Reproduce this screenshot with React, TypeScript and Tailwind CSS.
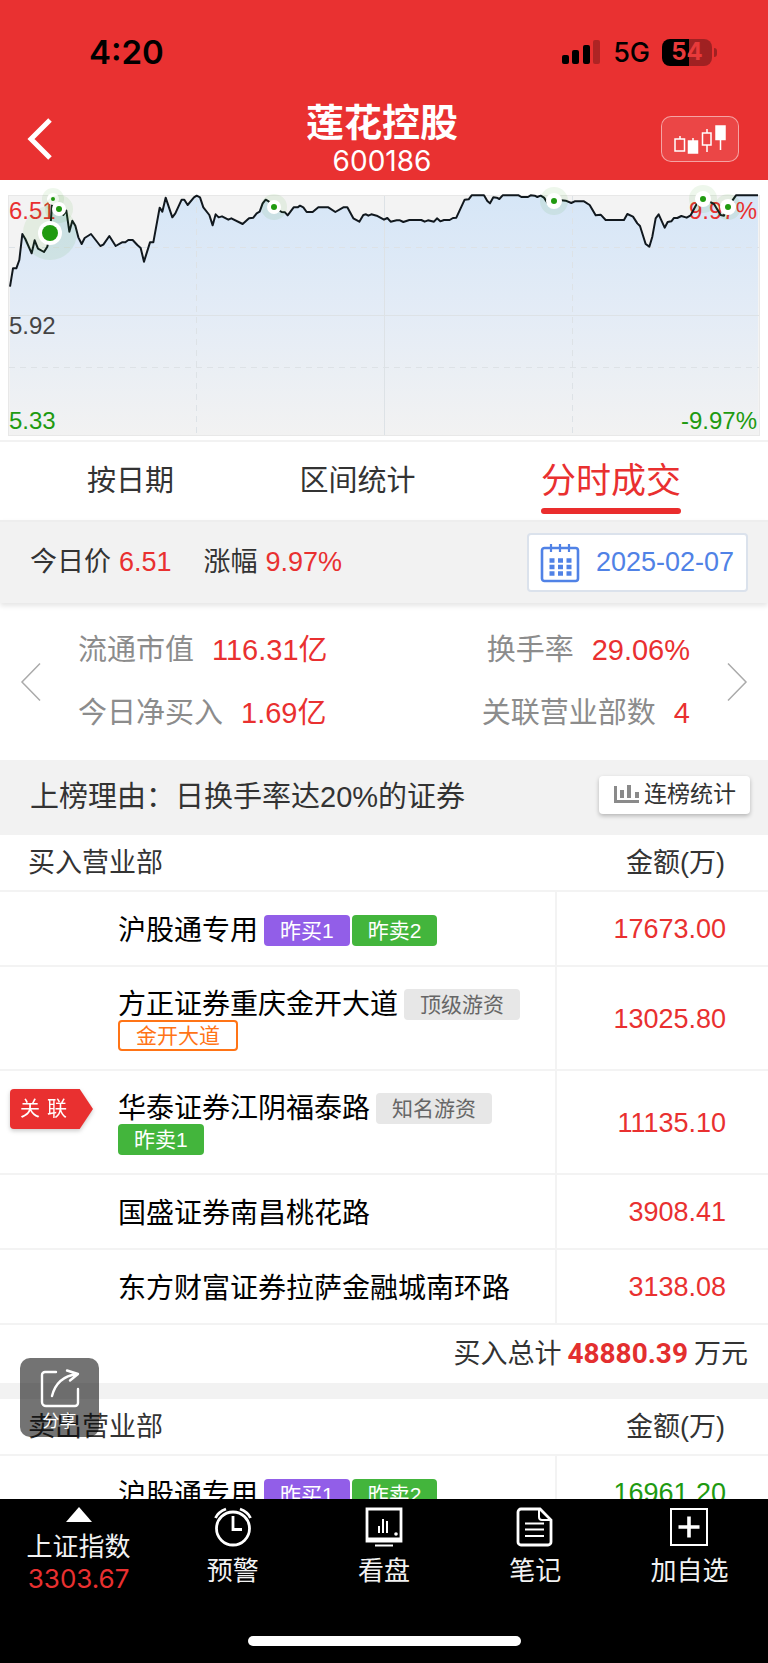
import type { ReactNode } from 'react';
import cn from 'clsx';

type TagKind = 'buy' | 'sell' | 'level' | 'alias';

interface Tag {
  kind: TagKind;
  text: string;
}

interface Seat {
  name: string;
  amount: string;
  tags?: Tag[];
  // tag shown on a line of its own, below the name
  extra?: Tag;
  related?: boolean;
}

const buySeats: Seat[] = [
  {
    name: '沪股通专用',
    amount: '17673.00',
    tags: [
      { kind: 'buy', text: '昨买1' },
      { kind: 'sell', text: '昨卖2' },
    ],
  },
  {
    name: '方正证券重庆金开大道',
    amount: '13025.80',
    tags: [{ kind: 'level', text: '顶级游资' }],
    extra: { kind: 'alias', text: '金开大道' },
  },
  {
    name: '华泰证券江阴福泰路',
    amount: '11135.10',
    tags: [{ kind: 'level', text: '知名游资' }],
    extra: { kind: 'sell', text: '昨卖1' },
    related: true,
  },
  { name: '国盛证券南昌桃花路', amount: '3908.41' },
  { name: '东方财富证券拉萨金融城南环路', amount: '3138.08' },
];

const sellSeats: Seat[] = [
  {
    name: '沪股通专用',
    amount: '16961.20',
    tags: [
      { kind: 'buy', text: '昨买1' },
      { kind: 'sell', text: '昨卖2' },
    ],
  },
];

// minute line, three units per pixel of the chart
const line =
  '30,320 39,265 49,265 58,240 67,162 76,177 95,220 104,181 114,206 132,216 142,200 150,160 156,75 160,60 178,90 190,105 199,92 208,155 217,122 226,137 235,172 245,192 254,174 273,162 301,198 310,194 328,168 347,198 366,187 376,187 385,180 398,180 412,195 422,204 432,245 450,187 460,187 479,83 487,95 497,53 517,112 526,100 545,59 553,59 563,75 582,52 590,47 600,52 610,82 628,105 638,136 647,103 656,112 666,109 685,119 694,115 728,132 747,115 760,113 770,100 779,95 788,70 797,59 806,64 821,81 845,96 855,97 863,106 881,82 893,82 900,77 910,82 920,96 938,96 955,82 985,82 1006,96 1030,82 1042,82 1060,115 1078,125 1090,105 1098,103 1105,107 1114,103 1130,107 1152,119 ' +
  '1162,114 1172,125 1190,121 1200,121 1210,126 1228,120 1264,120 1274,125 1284,121 1302,125 1311,115 1321,124 1332,120 1349,120 1359,114 1369,113 1394,59 1406,58 1415,46 1452,46 1462,63 1470,70 1480,52 1490,53 1498,57 1508,46 1556,46 1564,51 1584,51 1592,46 1604,47 1612,51 1622,47 1632,53 1642,68 1657,80 1677,60 1697,62 1714,69 1724,64 1752,64 1769,75 1787,106 1802,104 1817,120 1872,120 1882,102 1899,110 1912,130 1920,138 1937,192 1948,200 1957,170 1967,115 1976,103 1994,143 2003,126 2014,124 2022,114 2032,114 2044,108 2060,113 2072,106 2090,72 2108,57 2127,64 2142,72 2162,105 2172,107 2182,80 2197,62 2208,46 2274,46';

const dots = [
  { x: 50, y: 53, halo: 27, ring: 12, dot: 8 },
  { x: 53, y: 19, halo: 11, ring: 6, dot: 2 },
  { x: 59, y: 29, halo: 14, ring: 7, dot: 3 },
  { x: 274, y: 27, halo: 13, ring: 7, dot: 3 },
  { x: 554, y: 21, halo: 14, ring: 8, dot: 3 },
  { x: 703, y: 19, halo: 14, ring: 8, dot: 3 },
  { x: 728, y: 27, halo: 13, ring: 8, dot: 3 },
];

function StatusBar() {
  return (
    <div className="flex h-[102px] items-center justify-between pt-[2px] pr-[51px] pl-[89px] text-black">
      <span className="font-[Inter] text-[33px] leading-none font-semibold">4:20</span>
      <div className="flex items-center gap-3">
        <svg width="40" height="26" viewBox="0 0 40 26">
          <rect x="1" y="16" width="7" height="9" rx="2" />
          <rect x="11" y="11" width="7" height="14" rx="2" />
          <rect x="22" y="6" width="7" height="19" rx="2" />
          <rect x="32" y="1" width="7" height="24" rx="2" opacity="0.25" />
        </svg>
        <span className="font-[Inter] text-[27px] leading-none font-medium">5G</span>
        <div className="flex items-center gap-[2px]">
          <div className="flex h-[27px] w-[50px] items-center justify-center rounded-[8px] bg-linear-to-r from-black from-54% to-[#a02122] to-54% font-[Inter] text-[24px] leading-none font-bold text-[#e83a3a]">
            54
          </div>
          <div className="h-[9px] w-[3px] rounded-r-full bg-[#a02122]" />
        </div>
      </div>
    </div>
  );
}

function TitleBar() {
  return (
    <div className="flex h-[78px] items-center justify-between pr-[29px] pb-1 pl-[25px] text-white">
      <button aria-label="返回" className="w-[78px]">
        <svg className="block" width="28" height="44" viewBox="0 0 28 44" fill="none" stroke="white" strokeWidth="5">
          <path d="M25 3 6 22l19 19" />
        </svg>
      </button>
      <div className="flex flex-col items-center">
        <h1 className="text-[38px] leading-[44px] font-bold">莲花控股</h1>
        <span className="font-[Inter] text-[28px] leading-[32px]">600186</span>
      </div>
      <button
        aria-label="K线"
        className="flex h-[46px] w-[78px] items-center justify-center rounded-[10px] border border-white/50 bg-white/10"
      >
        <svg width="54" height="32" viewBox="0 0 54 32" stroke="white" strokeWidth="1.5" fill="none">
          <path d="M7 13v3M20 15v4M34 6v4M34 22v7M47.5 15v12" />
          <rect x="2" y="16" width="9.5" height="12" />
          <rect x="15.5" y="18" width="9" height="12" fill="white" />
          <rect x="29.5" y="10" width="8.5" height="12" />
          <rect x="43" y="3" width="9" height="13.5" fill="white" />
        </svg>
      </button>
    </div>
  );
}

function MinuteChart() {
  return (
    <svg
      className="block w-full border-b-2 border-[#f2f2f2]"
      viewBox="0 0 768 260"
      fontSize="24"
      fontFamily="Liberation Sans, sans-serif"
    >
      <defs>
        <linearGradient id="area" x1="0" y1="0" x2="0" y2="1">
          <stop offset="0" stopColor="#d6e6f7" />
          <stop offset="0.5" stopColor="#e4ecf6" />
          <stop offset="1" stopColor="#f2f2f2" />
        </linearGradient>
      </defs>
      <rect x="8.5" y="15.5" width="751" height="240" fill="#f3f3f3" stroke="#e8e8e8" />
      <polygon
        points={`30,765 ${line} 2274,765`}
        transform="scale(0.33333)"
        fill="url(#area)"
      />
      <g stroke="#dde2e6" fill="none">
        <path d="M9 135.5h750M384.5 16v239" />
        <path d="M9 67.5h750M9 187.5h750M196.5 16v239M572.5 16v239" strokeDasharray="6 5" />
      </g>
      <text x="9" y="39" fill="#e93030">6.51</text>
      <text x="9" y="154" fill="#444">5.92</text>
      <text x="9" y="249" fill="#209a10">5.33</text>
      <text x="757" y="39" fill="#e93030" textAnchor="end">9.97%</text>
      <text x="757" y="249" fill="#209a10" textAnchor="end">-9.97%</text>
      <polyline
        points={line}
        transform="scale(0.33333)"
        fill="none"
        stroke="#11181e"
        strokeWidth="6"
        strokeLinejoin="round"
      />
      {dots.map(d => (
        <g key={d.x}>
          <circle cx={d.x} cy={d.y} r={d.halo} fill="#209a10" opacity="0.08" />
          <circle cx={d.x} cy={d.y} r={d.ring} fill="white" />
          <circle cx={d.x} cy={d.y} r={d.dot} fill="#209a10" />
        </g>
      ))}
    </svg>
  );
}

function Tabs() {
  return (
    <nav className="flex h-[78px] items-center justify-between px-[87px] text-[29px] text-[#333]">
      <button className="pt-[2px]">按日期</button>
      <button className="pt-[2px]">区间统计</button>
      <button className="flex h-full flex-col items-center justify-end gap-[2px] pb-[6px] text-[35px] leading-[50px] text-[#e93030]">
        分时成交
        <span className="h-[6px] w-full rounded-full bg-[#ea2d2d]" />
      </button>
    </nav>
  );
}

function PriceBar() {
  return (
    <div className="relative flex h-[83px] items-center justify-between border-t-2 border-[#eee] bg-[#f2f2f2] pr-5 pl-[30px] text-[27px] text-[#333] shadow-[0_3px_5px_rgba(0,0,0,0.1)]">
      <p className="flex gap-2">
        今日价
        <span className="text-[#e93030]">6.51</span>
        <span className="ml-6">涨幅</span>
        <span className="text-[#e93030]">9.97%</span>
      </p>
      <button className="flex h-[59px] items-center gap-4 rounded border-2 border-[#dbe2ec] bg-white pr-3 pl-[11px] text-[#5082e6]">
        <svg width="40" height="40" viewBox="0 0 40 40" fill="none" stroke="currentColor" strokeWidth="2.6">
          <rect x="2" y="5" width="36" height="33" rx="2.5" />
          <path d="M11 1v8M20 1v8M29 1v8" strokeWidth="2.2" />
          <path d="M9.5 17.5h23M9.5 24h23M9.5 30.5h23" strokeWidth="4.5" strokeDasharray="5 3.5" />
        </svg>
        2025-02-07
      </button>
    </div>
  );
}

interface StatProps {
  label: string;
  children: ReactNode;
  className?: string;
}

function Stat(props: StatProps) {
  const { label, children, className = '' } = props;
  return (
    <div className={cn('flex gap-[18px]', className)}>
      <dt className="text-[#8c8c8c]">{label}</dt>
      <dd className="text-[#e93030]">{children}</dd>
    </div>
  );
}

function Stats() {
  return (
    <section className="flex h-[157px] items-center justify-between px-5">
      <button aria-label="上一个">
        <svg width="22" height="40" viewBox="0 0 22 40" fill="none" stroke="#aaa" strokeWidth="1.5">
          <path d="M20 1.5 2 20l18 18.5" />
        </svg>
      </button>
      <dl className="flex flex-1 justify-between px-9 text-[29px] leading-[43px]">
        <div className="flex flex-col gap-5">
          <Stat label="流通市值">116.31亿</Stat>
          <Stat label="今日净买入">1.69亿</Stat>
        </div>
        <div className="flex flex-col gap-5">
          <Stat label="换手率" className="justify-end">29.06%</Stat>
          <Stat label="关联营业部数" className="justify-end">4</Stat>
        </div>
      </dl>
      <button aria-label="下一个">
        <svg width="22" height="40" viewBox="0 0 22 40" fill="none" stroke="#aaa" strokeWidth="1.5">
          <path d="m2 1.5 18 18.5L2 38.5" />
        </svg>
      </button>
    </section>
  );
}

function Reason() {
  return (
    <section className="flex h-[75px] items-center justify-between bg-[#f2f2f2] pr-[18px] pl-[30px] text-[#333]">
      <p className="text-[29px]">上榜理由：日换手率达20%的证券</p>
      <button className="mb-[5px] flex h-[38px] items-center gap-1 rounded bg-white px-[14px] pb-[2px] text-[23px] leading-none shadow-[0_2px_4px_rgba(0,0,0,0.25)]">
        <svg width="27" height="20" viewBox="0 0 27 20" fill="#8a8a8a">
          <path d="M1 2h3v14h22v3H1z" />
          <path d="M7 6h4v8H7zM14 1h4v13h-4zM22 8h4v6h-4z" />
        </svg>
        连榜统计
      </button>
    </section>
  );
}

function TagLabel({ kind, text }: Tag) {
  return (
    <span
      className={cn(
        'inline-flex h-[31px] items-center rounded px-4 text-[21px] leading-none',
        kind === 'buy' && 'bg-[#925ee8] text-white',
        kind === 'sell' && 'bg-[#43b53c] text-white',
        kind === 'level' && 'bg-[#e7e7e7] text-[#666]',
        kind === 'alias' && 'border-2 border-[#ff7416] text-[#ff7416]'
      )}
    >
      {text}
    </span>
  );
}

interface SeatTableProps {
  title: string;
  seats: Seat[];
  amountClass: string;
}

function SeatTable(props: SeatTableProps) {
  const { title, seats, amountClass } = props;
  return (
    <table className="w-full table-fixed text-[27px]">
      <colgroup>
        <col className="w-[118px]" />
        <col />
        <col className="w-[212px]" />
      </colgroup>
      <thead className="text-[#333]">
        <tr className="h-14 border-b-2 border-[#f3f3f3]">
          <th colSpan={2} className="pt-[2px] pl-7 text-left font-normal">{title}</th>
          <th className="pt-[2px] pr-[43px] text-right font-normal">金额(万)</th>
        </tr>
      </thead>
      <tbody>
        {seats.map(seat => (
          <tr
            key={seat.name}
            className={cn('border-b-2 border-[#f3f3f3]', seat.extra ? 'h-[104px]' : 'h-[75px]')}
          >
            <td className="pt-[18px] pl-[10px] align-top">
              {seat.related && (
                <span className="block w-[83px] drop-shadow-[0_2px_2px_rgba(0,0,0,0.2)]">
                  <span className="flex h-10 items-center gap-[7px] rounded-l bg-[#e93030] pl-[10px] text-[20px] text-white [clip-path:polygon(0_0,84%_0,100%_50%,84%_100%,0_100%)]">
                    <span>关</span>
                    <span>联</span>
                  </span>
                </span>
              )}
            </td>
            <td className="pt-[3px] text-[28px] leading-[31px] whitespace-nowrap text-black">
              <div className="flex items-center gap-[2px]">
                <span className="mr-1">{seat.name}</span>
                {seat.tags?.map(tag => <TagLabel key={tag.text} {...tag} />)}
              </div>
              {seat.extra && (
                <div className="flex">
                  <TagLabel {...seat.extra} />
                </div>
              )}
            </td>
            <td className={cn('border-l-2 border-[#f3f3f3] pt-[2px] pr-[42px] text-right', amountClass)}>
              {seat.amount}
            </td>
          </tr>
        ))}
      </tbody>
    </table>
  );
}

function ShareButton() {
  return (
    <button className="absolute bottom-[62px] left-5 flex h-[79px] w-[79px] flex-col items-center rounded-[10px] bg-black/55 pt-[10px] text-[17px] leading-[24px] text-white">
      <svg width="40" height="42" viewBox="0 0 40 42" fill="none" stroke="white" strokeWidth="2.4" strokeLinecap="round" strokeLinejoin="round">
        <path d="M16 4H5a3 3 0 0 0-3 3v27a4 4 0 0 0 4 4h29a3 3 0 0 0 3-3V21" />
        <path d="M12 28C15 16 22 8 37 6M27 2.5 38 6l-8 6.5" />
      </svg>
      分享
    </button>
  );
}

interface BarItemProps {
  label: string;
  children: ReactNode;
}

function BarItem(props: BarItemProps) {
  const { label, children } = props;
  return (
    <button className="flex flex-col items-center gap-[6px] pt-[8px] leading-[36px]">
      <svg width="40" height="40" viewBox="0 0 40 40" fill="none" stroke="white" strokeWidth="2.8">
        {children}
      </svg>
      {label}
    </button>
  );
}

function BottomBar() {
  return (
    <footer className="flex h-[164px] shrink-0 flex-col items-center justify-between bg-black pb-[17px] text-[26px] text-[#f2f2f2]">
      <div className="grid w-full grid-cols-[157fr_151fr_151fr_151fr_157fr]">
        <button className="flex flex-col items-center pt-[8px] leading-[32px]">
          <svg width="26" height="15" viewBox="0 0 26 15" fill="white">
            <path d="M13 0 26 15H0z" />
          </svg>
          <span className="mt-[9px]">上证指数</span>
          <span className="font-[Inter] text-[#e93030]">3303.67</span>
        </button>
        <BarItem label="预警">
          <circle cx="20" cy="21.5" r="16.5" />
          <path d="M20 9v13.500h9" />
          <path d="M2.500 11Q5 5 13 2M27 2Q35 5 37.500 11" />
        </BarItem>
        <BarItem label="看盘">
          <path d="M3 2h34v32H3zM3 32h34" />
          <path d="M11 38.500h18" strokeWidth="2" />
          <path d="M15 19v7M19 12v14M23 14v12" strokeWidth="2" />
          <circle cx="32" cy="27" r="1.8" fill="white" stroke="none" />
        </BarItem>
        <BarItem label="笔记">
          <path d="M6 2h19l11 11v22a3 3 0 0 1-3 3H6a3 3 0 0 1-3-3V5a3 3 0 0 1 3-3z" />
          <path d="M24 2v8a3 3 0 0 0 3 3h9" strokeWidth="2" />
          <path d="M10 16.500h19M10 22.500h19M10 29h19" strokeWidth="2.2" />
        </BarItem>
        <BarItem label="加自选">
          <path d="M2 2h36v36H2z" strokeWidth="2" />
          <path d="M20 9.500v21M9.500 20h21" strokeWidth="3.6" />
        </BarItem>
      </div>
      <div className="h-[10px] w-[273px] rounded-full bg-white" />
    </footer>
  );
}

export default function App() {
  return (
    <div className="flex h-screen flex-col bg-white font-['Liberation_Sans','Noto_Sans_CJK_SC',sans-serif]">
      <header className="shrink-0 bg-[#e93131]">
        <StatusBar />
        <TitleBar />
      </header>
      <div className="relative flex min-h-0 flex-1 flex-col">
        <main className="min-h-0 flex-1 overflow-y-auto [scrollbar-width:none]">
          <MinuteChart />
          <Tabs />
          <PriceBar />
          <Stats />
          <Reason />
          <SeatTable title="买入营业部" seats={buySeats} amountClass="text-[#e93030]" />
          <p className="flex h-[58px] items-center justify-end gap-[6px] pr-5 text-[27px] text-[#333]">
            买入总计
            <strong className="font-[Roboto] text-[28px] font-bold text-[#e32f2f]">48880.39</strong>
            万元
          </p>
          <div className="h-4 bg-[#f2f2f2]" />
          <SeatTable title="卖出营业部" seats={sellSeats} amountClass="text-[#209a10]" />
        </main>
        <ShareButton />
      </div>
      <BottomBar />
    </div>
  );
}
